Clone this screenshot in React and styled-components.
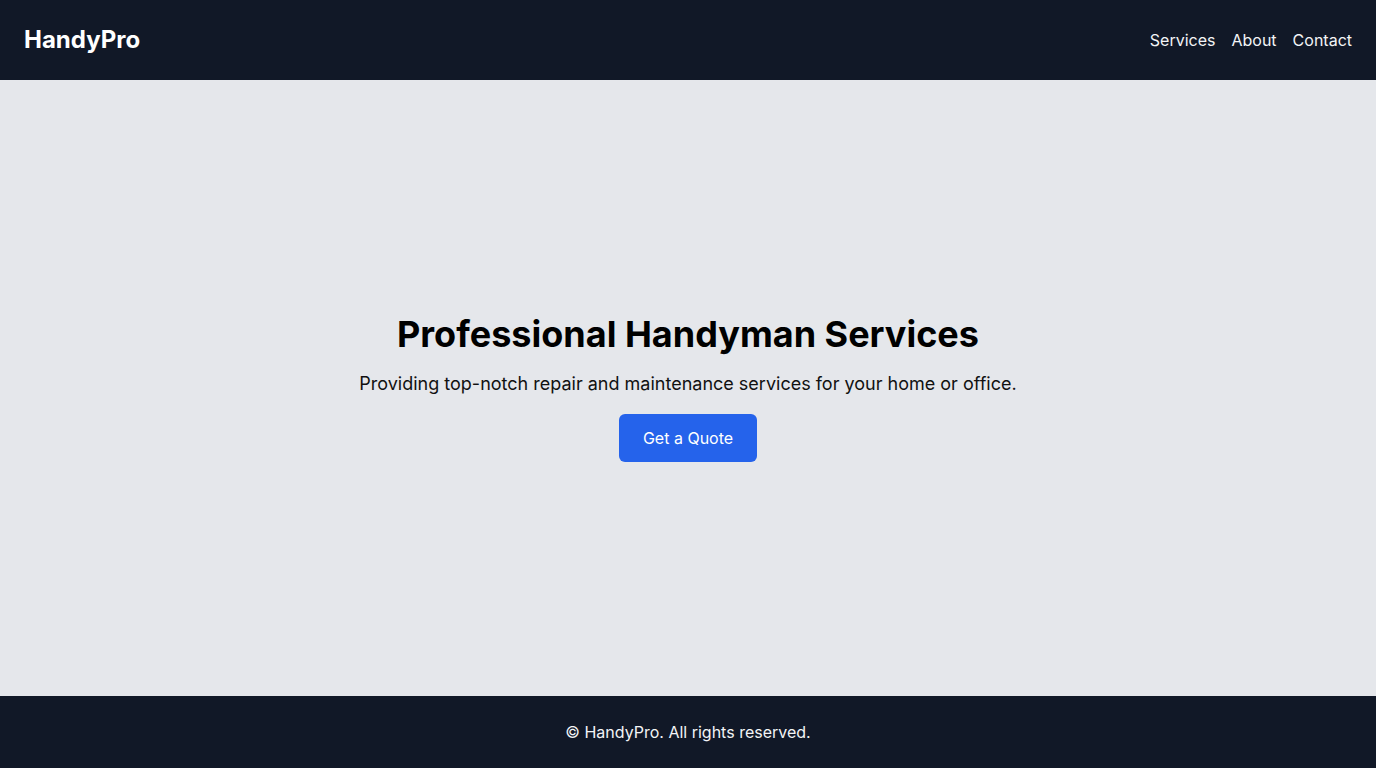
import React from "react";
import styled, { createGlobalStyle } from "styled-components";

const Global = createGlobalStyle`
  * { box-sizing: border-box; }
  html, body { margin: 0; padding: 0; }
  body { font-family: Inter, "Noto Sans", sans-serif; }
`;

const Page = styled.div`
  display: flex;
  flex-direction: column;
  min-height: 100vh;
`;

const Header = styled.header`
  display: flex;
  align-items: center;
  justify-content: space-between;
  height: 80px;
  padding: 24px;
  background: #111827;
  color: #ffffff;
`;

const Logo = styled.div`
  font-size: 24px;
  line-height: 32px;
  font-weight: 700;
`;

const Nav = styled.nav`
  display: flex;
  gap: 16px;
`;

const NavLink = styled.a`
  color: #f3f4f6;
  font-size: 16px;
  line-height: 24px;
  text-decoration: none;
`;

const Main = styled.main`
  flex: 1;
  display: flex;
  flex-direction: column;
  align-items: center;
  justify-content: center;
  background: #e5e7eb;
  text-align: center;
`;

const Title = styled.h1`
  margin: 0 0 16px;
  font-size: 36px;
  line-height: 40px;
  font-weight: 700;
  color: #000;
`;

const Lead = styled.p`
  margin: 0 0 16px;
  font-size: 18px;
  line-height: 28px;
  color: #111;
`;

const Button = styled.button`
  height: 48px;
  padding: 12px 24px;
  border: none;
  border-radius: 6px;
  background: #2563eb;
  color: #ffffff;
  font-family: inherit;
  font-size: 16px;
  line-height: 24px;
  cursor: pointer;
`;

const Footer = styled.footer`
  height: 72px;
  padding: 24px;
  background: #111827;
  color: #f3f4f6;
  text-align: center;
  font-size: 16px;
  line-height: 24px;
`;

export default function App() {
  return (
    <>
      <Global />
      <Page>
        <Header>
          <Logo>HandyPro</Logo>
          <Nav>
            <NavLink href="#">Services</NavLink>
            <NavLink href="#">About</NavLink>
            <NavLink href="#">Contact</NavLink>
          </Nav>
        </Header>
        <Main>
          <Title>Professional Handyman Services</Title>
          <Lead>Providing top-notch repair and maintenance services for your home or office.</Lead>
          <Button>Get a Quote</Button>
        </Main>
        <Footer>© HandyPro. All rights reserved.</Footer>
      </Page>
    </>
  );
}
